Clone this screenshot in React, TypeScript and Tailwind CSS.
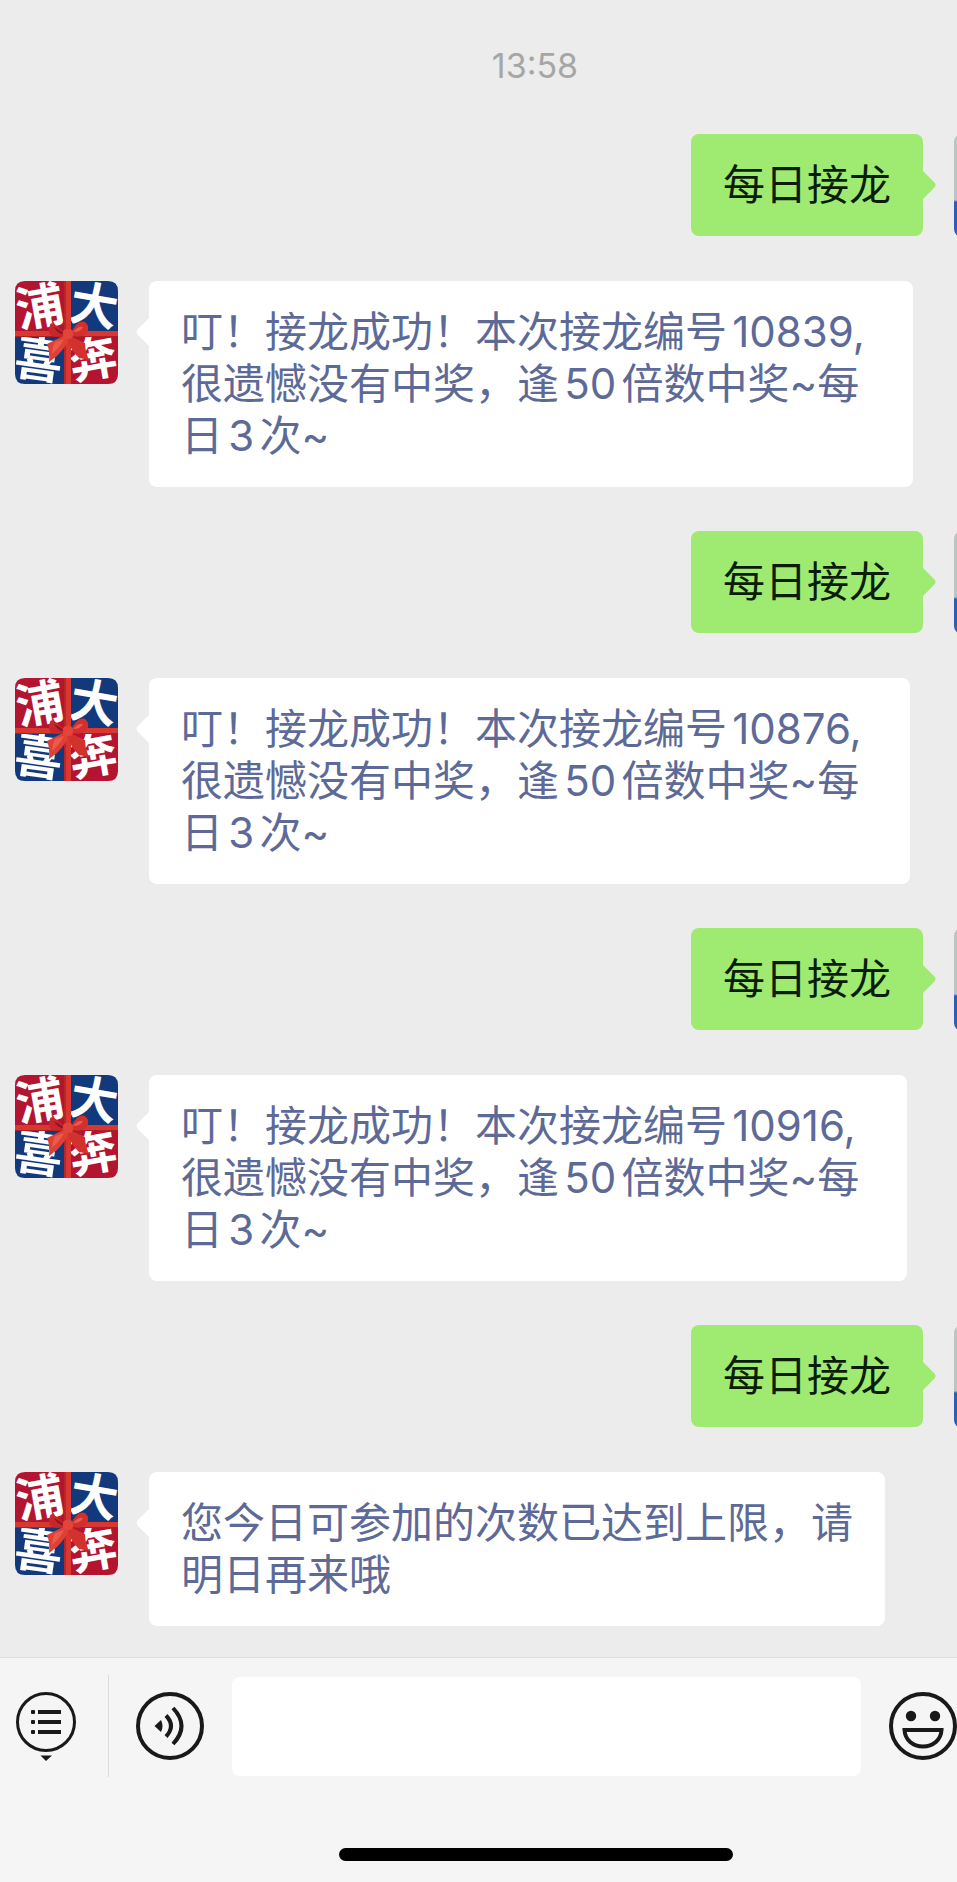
import React from 'react';

interface Message {
  id: number;
  from: 'me' | 'bot';
  lines: string[];
}

const messages: Message[] = [
  { id: 1, from: 'me', lines: ['每日接龙'] },
  { id: 2, from: 'bot', lines: ['叮！接龙成功！本次接龙编号10839,', '很遗憾没有中奖，逢50倍数中奖~每', '日3次~'] },
  { id: 3, from: 'me', lines: ['每日接龙'] },
  { id: 4, from: 'bot', lines: ['叮！接龙成功！本次接龙编号10876,', '很遗憾没有中奖，逢50倍数中奖~每', '日3次~'] },
  { id: 5, from: 'me', lines: ['每日接龙'] },
  { id: 6, from: 'bot', lines: ['叮！接龙成功！本次接龙编号10916,', '很遗憾没有中奖，逢50倍数中奖~每', '日3次~'] },
  { id: 7, from: 'me', lines: ['每日接龙'] },
  { id: 8, from: 'bot', lines: ['您今日可参加的次数已达到上限，请', '明日再来哦'] }
];

const BotAvatar: React.FC = () => (
  <svg viewBox="0 0 103 103" className="w-[103px] h-[103px] shrink-0 overflow-visible">
    <path d="M10 0 H52 V52 H0 V10 Q0 0 10 0 Z" fill="#b3142f" />
    <path d="M52 0 H93 Q103 0 103 10 V52 H52 Z" fill="#12397c" />
    <path d="M0 52 H52 V103 H10 Q0 103 0 93 Z" fill="#12397c" />
    <path d="M52 52 H103 V93 Q103 103 93 103 H52 Z" fill="#b3142f" />
    <g fill="#fff" fontFamily="'Noto Sans CJK SC', sans-serif" fontWeight="700" fontSize="48" textAnchor="middle">
      <text x="25" y="43" transform="rotate(-10 25 26)">浦</text>
      <text x="79" y="42" transform="rotate(10 79 26)">大</text>
      <text x="24" y="96" transform="rotate(8 24 78)">喜</text>
      <text x="78" y="95" transform="rotate(-10 78 78)">奔</text>
    </g>
    {/* Ribbon */}
    <rect x="49" width="7" height="103" fill="#d8382f" />
    <rect x="49" width="2" height="103" fill="#b8262a" />
    <rect y="50" width="103" height="6" fill="#d8382f" />
    <rect y="55" width="103" height="1" fill="#a81f26" />
    {/* Bow */}
    <path d="M50 54 L32 63 Q35 70 34 81 L42 75 Q51 66 55 56 Z" fill="#de4036" />
    <path d="M55 55 L70 62 Q70 70 74 79 L64 77 Q56 70 52 57 Z" fill="#d2322e" />
    <path d="M52 54 Q36 38 35 44 Q32 52 37 55 Q44 57 52 54 Z" fill="#c9262a" />
    <path d="M55 54 Q62 38 70 41 Q76 46 71 53 Q64 58 55 54 Z" fill="#d2302d" />
    <path d="M39 46 Q45 49 50 53 Q43 54 39 46 Z" fill="#8f1620" />
    <path d="M58 51 Q63 45 68 46 Q66 51 58 51 Z" fill="#ec5a4b" />
    <path d="M40 61 Q37 67 37 73 Q45 66 49 58 Z" fill="#ec5a4b" />
    <rect x="48" y="48" width="10" height="10" rx="4" fill="#e2443a" />
  </svg>
);

const MessageRow: React.FC<{ message: Message }> = ({ message }) => {
  const mine = message.from === 'me';
  const long = message.lines.length > 2;
  return (
    <li className={`flex items-start gap-[31px] ${mine ? 'justify-end' : 'pl-[15px]'}`}>
      {!mine && <BotAvatar />}
      <div
        className={`relative rounded-lg pl-8 py-[25px] text-[42px] leading-[52px] whitespace-nowrap [text-autospace:normal] ${
          long ? 'pr-12' : 'pr-8'
        } ${mine ? 'bg-[#9fea70] text-[#0b1d06]' : 'bg-white text-[#5d6a98]'}`}
      >
        {message.lines.map((line) => (
          <p key={line}>{line}</p>
        ))}
        {mine ? (
          <svg viewBox="0 0 13 28" className="absolute left-full top-[37px] w-[13px] h-7">
            <path d="M0 0 L11 11 Q14 14 11 17 L0 28 Z" fill="#9fea70" />
          </svg>
        ) : (
          <svg viewBox="0 0 13 28" className="absolute right-full top-[37px] w-[13px] h-7">
            <path d="M13 0 L2 11 Q-1 14 2 17 L13 28 Z" fill="#fff" />
          </svg>
        )}
      </div>
      {mine && (
        <div className="w-[103px] h-[103px] -mr-[100px] shrink-0 rounded-lg bg-linear-to-b from-[#b9c6c4] from-64% to-[#2f5fb0] to-66%" />
      )}
    </li>
  );
};

const ListIcon: React.FC = () => (
  <svg viewBox="0 0 60 70" className="w-[60px] h-[70px]">
    <circle cx="30" cy="31" r="28.500" fill="none" stroke="#191919" strokeWidth="3" />
    <g fill="#191919">
      <rect x="15" y="19" width="4" height="4" rx="1" />
      <rect x="22" y="19" width="23" height="4" />
      <rect x="15" y="29" width="4" height="4" rx="1" />
      <rect x="22" y="29" width="23" height="4" />
      <rect x="15" y="39" width="4" height="4" rx="1" />
      <rect x="22" y="39" width="23" height="4" />
      <path d="M24.500 64.500 H36 L30 70 Z" />
    </g>
  </svg>
);

const VoiceIcon: React.FC = () => (
  <svg viewBox="0 0 68 68" className="w-[68px] h-[68px]">
    <g fill="none" stroke="#191919" strokeWidth="4">
      <circle cx="34" cy="34" r="32" />
      <path d="M30 23.500 Q40 34 30 44.500" />
      <path d="M37 16 Q54 34 37 52" />
    </g>
    <path d="M18.500 34 L25 28 Q28 34 25 40 Z" fill="#191919" />
  </svg>
);

const SmileIcon: React.FC = () => (
  <svg viewBox="0 0 68 68" className="w-[68px] h-[68px]">
    <circle cx="34" cy="34" r="32" fill="none" stroke="#191919" strokeWidth="4" />
    <circle cx="22" cy="24" r="5.200" fill="#191919" />
    <circle cx="46" cy="24" r="5.200" fill="#191919" />
    <path d="M15.500 38 H52.500 C52 48 44 54.500 34 54.500 C24 54.500 16 48 15.500 38 Z" fill="none" stroke="#191919" strokeWidth="4" />
  </svg>
);

export default function App() {
  return (
    <div className="flex flex-col min-h-screen overflow-hidden bg-[#ececec] font-[Inter,'Noto_Sans_CJK_SC',sans-serif]">
      <main className="flex-1 pt-11 pb-[31px]">
        <time className="block pl-[113px] text-center text-[34px] leading-[44px] text-[#a6a6a6]">13:58</time>
        <ul className="flex flex-col gap-11 mt-[46px]">
          {messages.map((message) => (
            <MessageRow key={message.id} message={message} />
          ))}
        </ul>
      </main>

      <footer className="border-t border-[#dedede] bg-[#f5f5f5]">
        <div className="flex items-center pl-4 pt-[17px]">
          <button type="button" aria-label="菜单">
            <ListIcon />
          </button>
          <div className="w-px h-[102px] ml-8 mr-[27px] bg-[#dcdcdc]" />
          <button type="button" aria-label="语音">
            <VoiceIcon />
          </button>
          <input
            type="text"
            aria-label="消息"
            className="flex-1 min-w-0 h-[99px] mx-7 px-6 rounded-lg bg-white text-[42px] outline-none"
          />
          <button type="button" aria-label="表情">
            <SmileIcon />
          </button>
        </div>
        {/* Home indicator */}
        <div className="pl-[115px] pt-[71px] pb-[21px]">
          <div className="w-[394px] h-[13px] mx-auto rounded-full bg-black" />
        </div>
      </footer>
    </div>
  );
}
